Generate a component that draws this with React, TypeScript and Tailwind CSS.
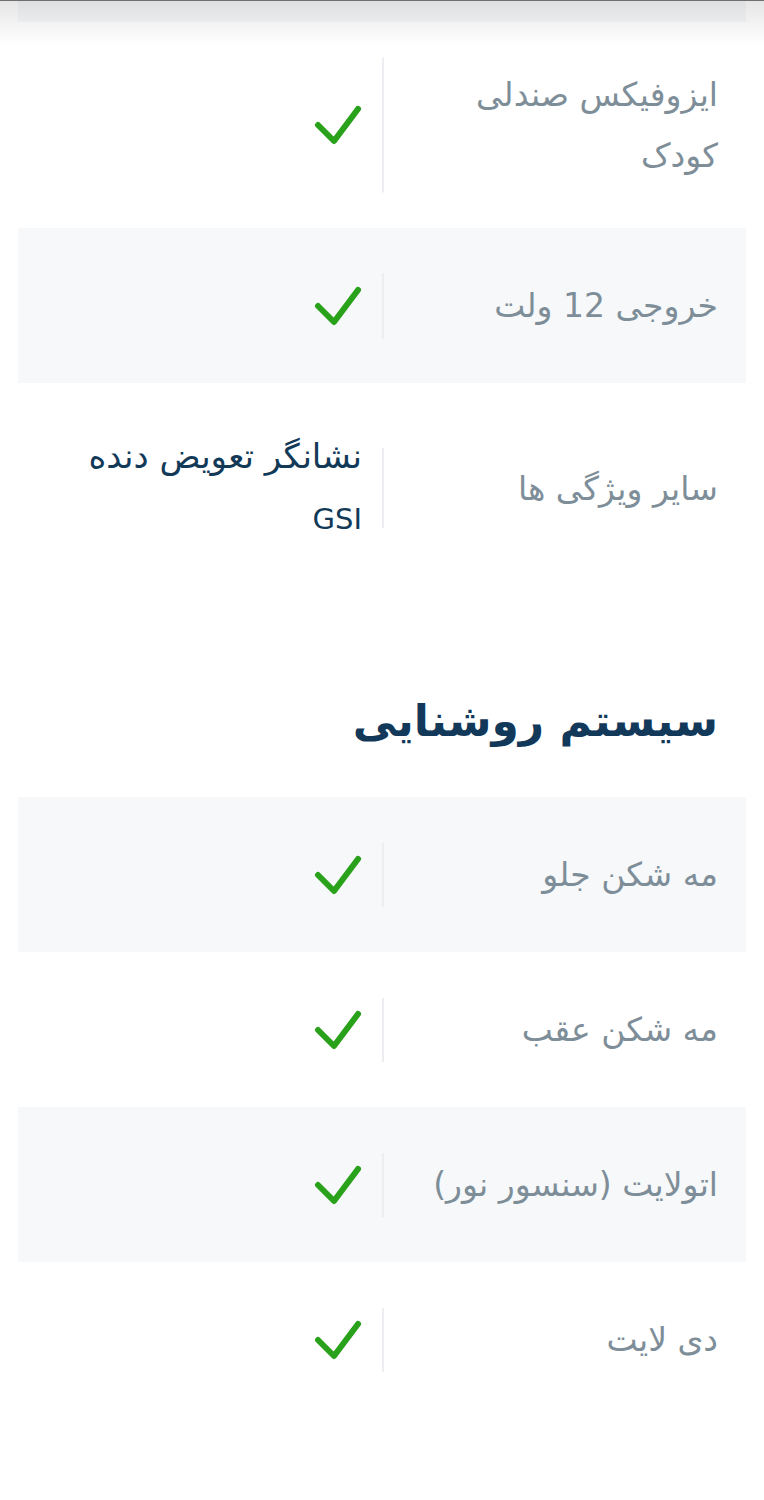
import React from 'react';

type Row = { label: string[]; value?: string[] };

const firstSection: Row[] = [
  { label: ['ایزوفیکس صندلی', 'کودک'] },
  { label: ['خروجی 12 ولت'] },
  { label: ['سایر ویژگی ها'], value: ['نشانگر تعویض دنده', 'GSI'] },
];

const lighting: Row[] = [
  { label: ['مه شکن جلو'] },
  { label: ['مه شکن عقب'] },
  { label: ['اتولایت (سنسور نور)'] },
  { label: ['دی لایت'] },
];

function Check() {
  return (
    <svg width="48" height="42" viewBox="0 0 48 42" fill="none">
      <path
        d="M4 21 L20 37 L44 5"
        stroke="#2aa11a"
        strokeWidth="6"
        strokeLinecap="round"
        strokeLinejoin="round"
      />
    </svg>
  );
}

function SpecRow({ row, shaded, dividerH }: { row: Row; shaded: boolean; dividerH: string }) {
  return (
    <div className={`grid grid-cols-2 items-center min-h-[155px] py-[42px] ${shaded ? 'bg-[#f6f8fa]' : 'bg-white'}`}>
      {/* label */}
      <div className="relative flex items-center pr-[28px] pl-4 text-[33px] leading-[61px] text-[#7e8e99]">
        <div>
          {row.label.map((l, i) => (
            <div key={i}>{l}</div>
          ))}
        </div>
        <div className={`absolute left-0 top-1/2 -translate-y-1/2 w-[2px] bg-[#eceef1] ${dividerH}`} />
      </div>
      {/* value */}
      <div className="flex items-center pr-[20px] pl-4">
        {row.value ? (
          <div className="text-[#123a58]">
            {row.value.map((v, i) => (
              <div key={i} className={/[a-z]/i.test(v) ? 'text-[29px] leading-[64px]' : 'text-[34px] leading-[62px]'}>
                {v}
              </div>
            ))}
          </div>
        ) : (
          <Check />
        )}
      </div>
    </div>
  );
}

export default function App() {
  return (
    <div
      dir="rtl"
      className="relative w-[764px] min-h-[1500px] bg-white"
      style={{ fontFamily: '"DejaVu Sans", "Noto Sans", sans-serif' }}
    >
      {/* header shadow overlay */}
      <div className="absolute inset-x-0 top-0 h-[1px] bg-[#6f6f6f]" />
      <div className="pointer-events-none absolute inset-x-0 top-[1px] h-[44px] bg-gradient-to-b from-black/10 to-transparent" />

      <div className="px-[18px]">
        <div className="h-[22px] bg-[#f6f8fa]" />
        {firstSection.map((r, i) => (
          <SpecRow
            key={i}
            row={r}
            shaded={i % 2 === 1}
            dividerH={i === 0 ? 'h-[135px]' : i === 1 ? 'h-[66px]' : 'h-[80px]'}
          />
        ))}

        <h2 className="pr-[28px] pt-[97px] pb-[45px] text-[44px] leading-[62px] font-bold text-[#12395a]">
          سیستم روشنایی
        </h2>

        {lighting.map((r, i) => (
          <SpecRow key={i} row={r} shaded={i % 2 === 0} dividerH="h-[64px]" />
        ))}
      </div>
    </div>
  );
}
